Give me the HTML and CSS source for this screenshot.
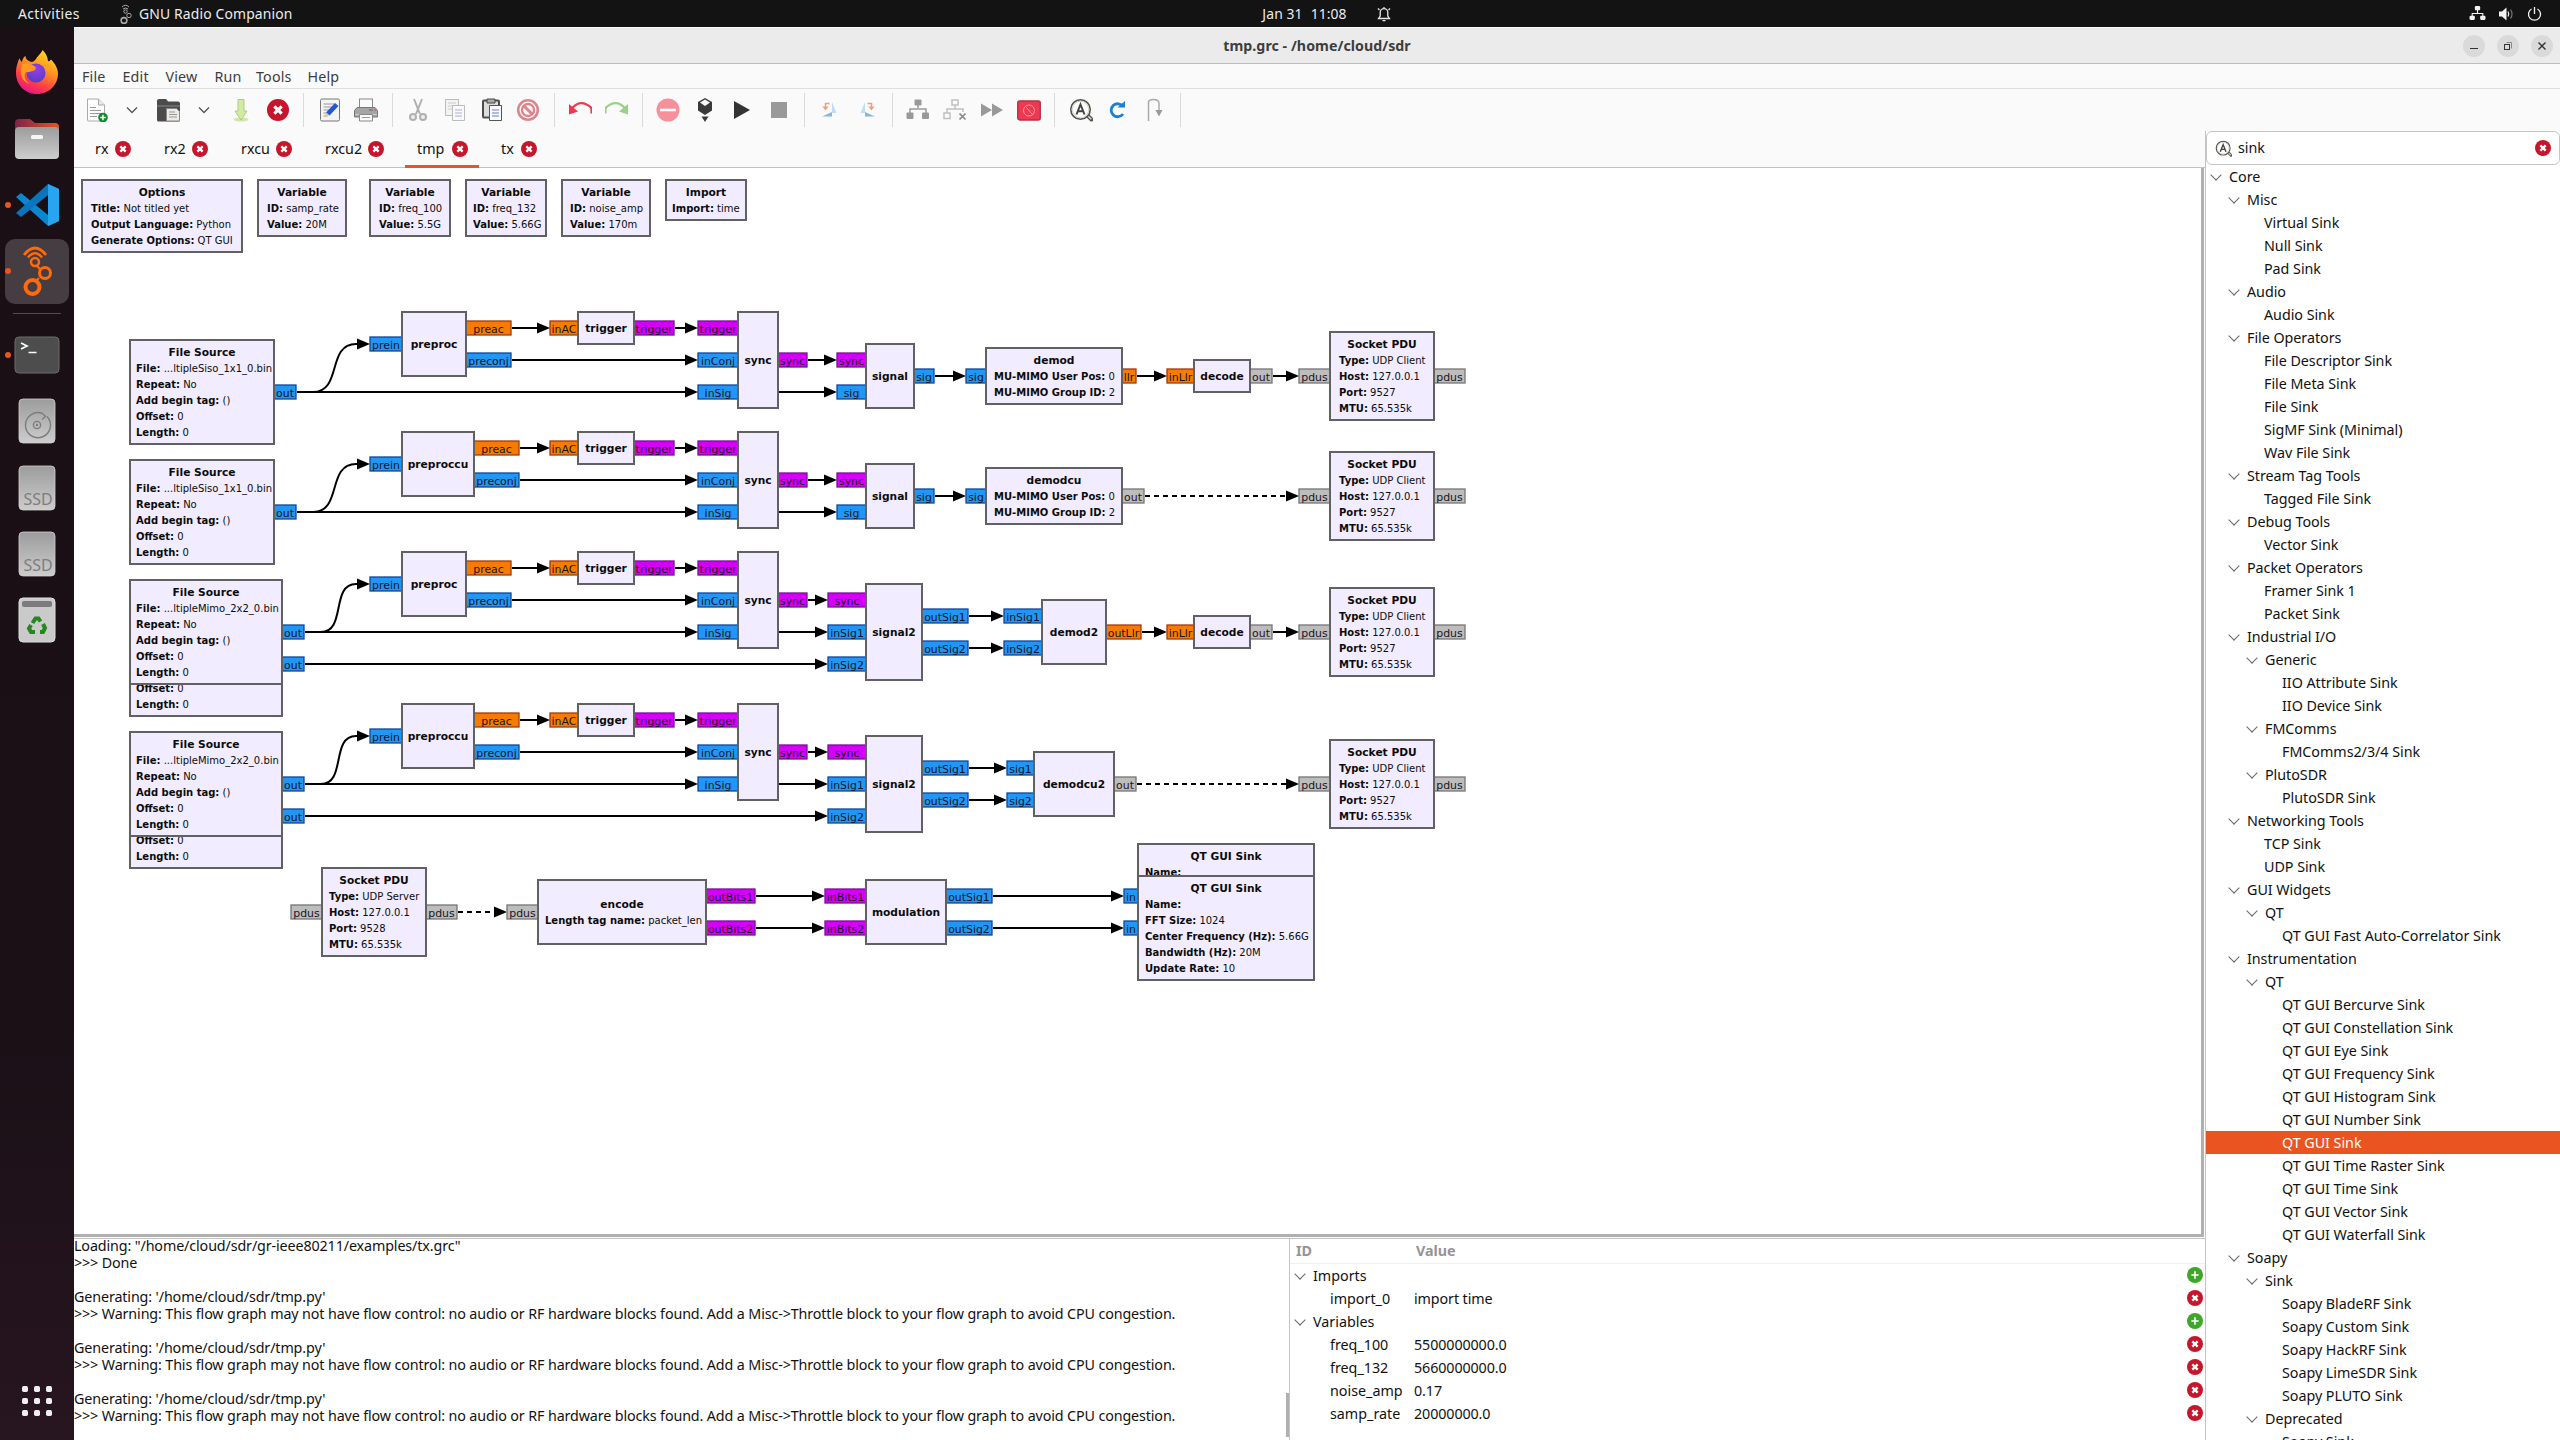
FILE: index.html
```html
<!DOCTYPE html>
<html lang="en">
<head>
<meta charset="utf-8">
<title>tmp.grc - /home/cloud/sdr</title>
<link rel="stylesheet" href="styles.css">
</head>
<body>
<svg class="defs" aria-hidden="true">
  <symbol id="i-close" viewBox="0 0 24 24"><circle cx="12" cy="12" r="12" fill="#c7162b"/><path d="M8 8l8 8M16 8l-8 8" stroke="#fff" stroke-width="3.4"/></symbol>
  <symbol id="i-add" viewBox="0 0 24 24"><circle cx="12" cy="12" r="12" fill="#3fa62a"/><path d="M12 6.5v11M6.500 12h11" stroke="#fff" stroke-width="2.400"/></symbol>
  <symbol id="i-find" viewBox="0 0 24 24"><path d="M18 17l4.500 4.500" stroke="#55554f" stroke-width="4" stroke-linecap="round"/><path d="M18 17l4.300 4.300" stroke="#d9d9d0" stroke-width="1.600"/><circle cx="11.500" cy="11.500" r="9.700" fill="#fff" stroke="#55554f" stroke-width="1.700"/><circle cx="11.500" cy="11.500" r="8.300" fill="none" stroke="#d6d6cc" stroke-width="1.200"/><path d="M7.500 16.500l4-10 4 10M9 13.200h5" fill="none" stroke="#444" stroke-width="2"/></symbol>
  <symbol id="i-chev" viewBox="0 0 12 12"><path d="M1 3.500l5 5 5-5" fill="none" stroke="#555" stroke-width="1.300"/></symbol>
  <symbol id="i-net" viewBox="0 0 16 16"><path d="M8 4v4M3 12V8h10v4" fill="none" stroke="#f2f2f2"/><rect x="5.500" y="1" width="5" height="4" rx="1" fill="#f2f2f2"/><rect x=".5" y="10" width="5" height="4" rx="1" fill="#f2f2f2"/><rect x="10.500" y="10" width="5" height="4" rx="1" fill="#f2f2f2"/></symbol>
  <symbol id="i-ssd" viewBox="0 0 38 46"><rect x="1" y="1" width="36" height="44" rx="4" fill="url(#metal)" stroke="#d0d0d0" stroke-width=".8"/></symbol>
  <linearGradient id="metal" x1="0" y1="0" x2="0" y2="1"><stop offset="0" stop-color="#9c9c9c"/><stop offset="1" stop-color="#cdcdcd"/></linearGradient>
  <linearGradient id="fold" x1="0" y1="0" x2="1" y2="0"><stop offset="0" stop-color="#7a2548"/><stop offset="1" stop-color="#e95420"/></linearGradient>
  <linearGradient id="fox" x1=".8" y1="0" x2=".3" y2="1"><stop offset="0" stop-color="#ffe226"/><stop offset=".4" stop-color="#ff9420"/><stop offset=".75" stop-color="#ff3a4a"/><stop offset="1" stop-color="#e31587"/></linearGradient>
  <radialGradient id="globe" cx=".5" cy=".3" r=".8"><stop offset="0" stop-color="#9a3cf0"/><stop offset="1" stop-color="#4b3fb8"/></radialGradient>
</svg>

<header class="topbar">
  <div class="top-left">
    <span class="activities">Activities</span>
    <svg class="ic-gr" viewBox="0 0 16 20" fill="none" stroke="#a8a8a8"><path d="M5 3Q8.500-.5 12 3M6 5Q8.500 3 11 5"/><circle cx="8.500" cy="7.500" r="1.700"/><circle cx="12" cy="11.500" r="2.200"/><circle cx="7" cy="16.500" r="2.900" stroke-width="1.600"/></svg>
    <span class="appname">GNU Radio Companion</span>
  </div>
  <div class="clock"><span>Jan 31</span><span>11:08</span>
    <svg width="16" height="16" viewBox="0 0 16 16" fill="none" stroke="#e8e8e8" stroke-width="1.300"><path d="M2.500 12.500h11l-1.700-2.500V6.500a3.800 3.800 0 0 0-7.600 0V10zM6.500 14.700h3M8 1v1.500M2 2.500l1.500 1.500M14 2.500L12.500 4"/></svg>
  </div>
  <div class="status">
    <svg width="17" height="17"><use href="#i-net"/></svg>
    <svg width="17" height="16" viewBox="0 0 17 16"><path d="M1 5.500h3L8.500 1.500v13L4 10.500H1z" fill="#f2f2f2"/><path d="M10 5.500q1.500 2.500 0 5" fill="none" stroke="#f2f2f2" stroke-width="1.200"/><path d="M12.500 3.500q3 4.500 0 9" fill="none" stroke="#777" stroke-width="1.200"/></svg>
    <svg width="15" height="16" viewBox="0 0 15 16" fill="none" stroke="#f2f2f2" stroke-width="1.300"><path d="M4.500 3A6 6 0 1 0 10.500 3M7.500 1v7"/></svg>
  </div>
</header>

<div class="desktop">
<nav class="dock">
  <div class="app"><svg width="44" height="44" viewBox="0 0 44 44"><path d="M22 44C9 44 1 34 1 23 1 16 3 12 4.500 8c.5 2 1.500 3.500 2.500 4C7.500 9 9 6.500 10.500 6c0 3 2 5 6 6C20 12 21 8 24 5 26 3 27 1 27.500 0c3 3 5 6 5.500 11 2 1 2-1 3-1.500 4 4 7 9 7 14C43 35 34 44 22 44z" fill="url(#fox)"/><circle cx="21" cy="23" r="9.500" fill="url(#globe)"/><path d="M7 14c5-2 9 0 12 2 3 1 2 4-1 5-3 0-4 2-7 1-3 3-1 9 4 12-8-2-11-10-8-20z" fill="#ff9a1e"/></svg></div>
  <div class="app"><svg width="46" height="42" viewBox="0 0 46 42"><path d="M1 5q0-4 4-4h11l5 4h20q4 0 4 4v12H1z" fill="url(#fold)"/><rect x="1" y="9" width="44" height="32" rx="4" fill="url(#metal)"/><rect x="17" y="17" width="12" height="4" rx="1.500" fill="#f6f6f6"/></svg></div>
  <div class="app running"><svg width="44" height="44" viewBox="0 0 44 44"><path d="M33 1L44 6v32l-11 5L1 14l5-4 27 22z" fill="#0b87d1"/><path d="M33 1L1 30l5 4 27-22z" fill="#0a74bd"/><path d="M33 1l11 5v32l-11 5z" fill="#27a5f0"/></svg></div>
  <div class="app running active"><svg width="36" height="50" viewBox="0 0 36 50" fill="none" stroke="#ff6a0b"><path d="M5 9Q16-5 27 9" stroke-width="2.800"/><path d="M9 11.500Q16 3 23 11.500" stroke-width="2.600"/><circle cx="16" cy="16" r="4" stroke-width="2.500"/><path d="M18 20l4 4M20 32l-3 3" stroke-width="2"/><circle cx="26" cy="27" r="5.500" stroke-width="3"/><circle cx="13.500" cy="41" r="7" stroke-width="4"/></svg></div>
  <hr class="dock-sep">
  <div class="app running"><svg width="46" height="38" viewBox="0 0 46 38"><rect x="1" y="1" width="44" height="36" rx="4" fill="#4d4d4d" stroke="#6c6c6c"/><path d="M7 7l6 3-6 3M14.500 16.500h8" fill="none" stroke="#fff" stroke-width="1.700"/></svg></div>
  <div class="app"><svg width="38" height="46" viewBox="0 0 38 46"><use href="#i-ssd"/><g fill="none" stroke="#7d7d7d" stroke-width="1.400"><path d="M29 18.500A12.500 12.500 0 1 1 24.500 15.500M24.500 15.500L27.500 18.500 24 21.500"/><circle cx="19" cy="27" r="3.600"/></g><circle cx="19" cy="27" r="1.200" fill="#7d7d7d"/></svg></div>
  <div class="app"><svg width="38" height="46" viewBox="0 0 38 46"><use href="#i-ssd"/><text x="5.500" y="40" class="ssd-label">SSD</text></svg></div>
  <div class="app"><svg width="38" height="46" viewBox="0 0 38 46"><use href="#i-ssd"/><text x="5.500" y="40" class="ssd-label">SSD</text></svg></div>
  <div class="app"><svg width="38" height="46" viewBox="0 0 38 46"><rect x="1" y="1" width="36" height="44" rx="4" fill="#cacaca" stroke="#ddd"/><rect x="4" y="4" width="30" height="6" rx="2" fill="#7b7b7b"/><g fill="none" stroke="#26861f" stroke-width="4"><path d="M14.500 26l3-4.500h3l2 3"/><path d="M25 27l2 4-2 4h-3"/><path d="M17 35h-4l-2-3.500 2-3.500"/></g></svg></div>
  <div class="app apps"><svg width="30" height="30" viewBox="0 0 30 30" fill="#efefef"><rect width="6" height="6" rx="1.700"/><rect x="12" width="6" height="6" rx="1.700"/><rect x="24" width="6" height="6" rx="1.700"/><rect y="12" width="6" height="6" rx="1.700"/><rect x="12" y="12" width="6" height="6" rx="1.700"/><rect x="24" y="12" width="6" height="6" rx="1.700"/><rect y="24" width="6" height="6" rx="1.700"/><rect x="12" y="24" width="6" height="6" rx="1.700"/><rect x="24" y="24" width="6" height="6" rx="1.700"/></svg></div>
</nav>

<main class="window">
  <div class="titlebar">
    <h1>tmp.grc - /home/cloud/sdr</h1>
    <div class="winbtns">
      <span><svg width="22" height="22"><path d="M7 13.500h8" stroke="#333"/></svg></span>
      <span><svg width="22" height="22" fill="none"><path d="M9.500 7.500h5v6" stroke="#888"/><rect x="7.500" y="9.500" width="5" height="5" stroke="#333"/></svg></span>
      <span><svg width="22" height="22"><path d="M7.500 7.500l7 7M14.500 7.500l-7 7" stroke="#333" stroke-width="1.400"/></svg></span>
    </div>
  </div>
  <nav class="menubar"><span>File</span><span>Edit</span><span>View</span><span>Run</span><span>Tools</span><span>Help</span></nav>
  <div class="toolbar">
    <i><svg viewBox="0 0 24 24"><path d="M3.500 1h11l6 6v15.500q0 .5-.5.500h-16q-.5 0-.5-.5z" fill="#fdfdfd" stroke="#aaa"/><path d="M14.500 1v6h6" fill="#e8e8e8" stroke="#aaa"/><path d="M6 9.500h6M6 12.500h11M6 15.500h11M6 18.500h7" stroke="#999"/><circle cx="19" cy="19.500" r="4.800" fill="#12872b"/><path d="M19 16.800v5.400M16.300 19.500h5.400" stroke="#fff" stroke-width="1.400"/></svg></i>
    <i class="drop"><svg viewBox="0 0 12 12"><use href="#i-chev"/></svg></i>
    <i><svg viewBox="0 0 24 24"><path d="M0 22V3q0-2 2-2h7l2 2.500h10q2 0 2 2V22q0 1.500-1.500 1.500h-20Q0 23.500 0 22z" fill="#4b4b4b"/><path d="M0 8h23" stroke="#8a8a8a"/><path d="M9.500 10.500h10l3 3v9.500h-13z" fill="#eceae2" stroke="#888"/><path d="M12 14h6M12 16.500h8M12 19h8" stroke="#999"/></svg></i>
    <i class="drop"><svg viewBox="0 0 12 12"><use href="#i-chev"/></svg></i>
    <i><svg viewBox="0 0 24 24"><ellipse cx="12" cy="21.500" rx="7.500" ry="2" fill="#cfe8a8"/><path d="M9 1.500h6V13h3L12 22 6 13h3z" fill="#d3eaa0" stroke="#b0c98a"/></svg></i>
    <i><svg class="big-close" viewBox="0 0 24 24"><use href="#i-close"/></svg></i>
    <b></b>
    <i><svg viewBox="0 0 24 24"><rect x="2.500" y="1" width="19" height="22" rx="1.500" fill="#f4f4f4" stroke="#777"/><path d="M5.500 6h11M5.500 9h9M5.500 12h6M5.500 15h3M5.500 18h4" stroke="#999"/><path d="M17 5l3.500 3-9 9.500L8 14.500z" fill="#2257d6"/><path d="M8 14.500l3.500 3L6.500 19z" fill="#e8c890"/></svg></i>
    <i><svg viewBox="0 0 24 24"><rect x="5.500" y="1" width="13" height="11" fill="#fafafa" stroke="#888"/><path d="M3 9.500h18l2.500 3V19h-23v-6.500z" fill="#a5a5a5" stroke="#777"/><path d="M1 16.500h22" stroke="#ccc"/><path d="M15 12h4" stroke="#666"/><path d="M20 12h2" stroke="#e44"/><path d="M5.500 16.500h13V23h-13z" fill="#fafafa" stroke="#888"/><path d="M8 19.500h8" stroke="#999"/></svg></i>
    <b></b>
    <i><svg viewBox="0 0 24 24" fill="none" stroke="#b0b0b0" stroke-width="2"><path d="M8 1l6 15M16 1l-6 15"/><circle cx="7" cy="19" r="3" fill="#eee"/><circle cx="17" cy="19" r="3" fill="#eee"/></svg></i>
    <i><svg viewBox="0 0 24 24" stroke="#bbb"><path d="M2.500 1.500h13v16h-13z" fill="#f3f3f3"/><path d="M5 5h8M5 8h8M5 11h4" stroke="#ccc"/><path d="M9.500 7.500h12v15h-12z" fill="#fafafa"/><path d="M12 12h7M12 15h7M12 18h7" stroke="#aab0ea"/></svg></i>
    <i><svg viewBox="0 0 24 24"><rect x="3" y="2.500" width="16" height="17" rx="1" fill="#dcdcdc" stroke="#4c4c4c" stroke-width="2"/><path d="M7 1h8v4H7z" fill="#aaa" stroke="#444"/><path d="M9.500 7.500h12v15h-12z" fill="#fafafa" stroke="#555"/><path d="M12 12h7M12 15h7M12 18h7" stroke="#6e79e0"/></svg></i>
    <i><svg viewBox="0 0 24 24" fill="none"><circle cx="12" cy="12" r="9.800" stroke="#e0848c" stroke-width="2.600"/><circle cx="12" cy="12" r="6" stroke="#e0848c" stroke-width="2.400"/><path d="M7.500 7.500l9 9" stroke="#e0848c" stroke-width="3"/></svg></i>
    <b></b>
    <i><svg viewBox="0 0 24 24"><path d="M2.500 12Q12-.5 23 9.500q.8 1.500.5 6" fill="none" stroke="#f0384c" stroke-width="2.200"/><path d="M1 6v10.500l9-3z" fill="#f0384c"/></svg></i>
    <i><svg viewBox="0 0 24 24"><path d="M21.500 12Q12-.5 1 9.500.2 11 .5 15.500" fill="none" stroke="#97d285" stroke-width="2.200"/><path d="M23 6v10.500l-9-3z" fill="#97d285"/></svg></i>
    <b></b>
    <i><svg viewBox="0 0 24 24"><circle cx="12" cy="12" r="11.500" fill="#f7909b"/><path d="M4 12h16" stroke="#fff" stroke-width="2.600"/></svg></i>
    <i><svg viewBox="0 0 24 24"><path d="M12 0l7 4v8.500l-7 4.500-7-4.500V4z" fill="#3a3a3a"/><path d="M12 1.500l5 3-5 3.500-5-3.500z" fill="#fafafa"/><path d="M8.500 18.500h7L12 24z" fill="#3a3a3a"/></svg></i>
    <i><svg viewBox="0 0 24 24"><path d="M4 3l16 9-16 9z" fill="#333"/></svg></i>
    <i><svg viewBox="0 0 24 24"><path d="M4 4h16v16H4z" fill="#999"/></svg></i>
    <b></b>
    <i><svg viewBox="0 0 24 24"><path d="M14 4l4.500 11H14z" fill="#c3dcf3"/><path d="M14 14v4.500H4z" fill="#82b7e6"/><path d="M11.500 5.500h-4v5" fill="none" stroke="#f29c7e" stroke-width="1.500"/><path d="M4.500 8.500h6l-3 4z" fill="#f29c7e"/></svg></i>
    <i><svg viewBox="0 0 24 24"><path d="M10 4L5.500 15H10z" fill="#c3dcf3"/><path d="M10 14v4.500h10z" fill="#82b7e6"/><path d="M12.500 5.500h4v5" fill="none" stroke="#f29c7e" stroke-width="1.500"/><path d="M13.500 8.500h6l-3 4z" fill="#f29c7e"/></svg></i>
    <b></b>
    <i><svg viewBox="0 0 24 24" fill="#999"><path d="M12 6v4M4 15v-4h16v4" fill="none" stroke="#999" stroke-width="1.500"/><rect x="8.500" y="1.500" width="7" height="6" rx="1"/><rect x=".5" y="14.500" width="7" height="6.500" rx="1"/><rect x="16" y="14.500" width="7" height="6.500" rx="1"/></svg></i>
    <i><svg viewBox="0 0 24 24" fill="none" stroke="#c0c0c0" stroke-width="1.500"><path d="M12 7v4M4 15v-4h16v3"/><rect x="9" y="2" width="6" height="5"/><rect x="1" y="15" width="6" height="5.500"/><path d="M16.500 15.500l6 6M22.500 15.500l-6 6" stroke="#888" stroke-width="1.700"/></svg></i>
    <i><svg viewBox="0 0 24 24" fill="#999"><path d="M1 5.500l11 6.500-11 6.500zM12 5.500l11 6.500-11 6.500z"/></svg></i>
    <i><svg viewBox="0 0 24 24"><rect x=".7" y="3" width="22.600" height="19" rx="2" fill="#ed3a51" stroke="#b23343" stroke-width="1.300"/><g fill="none" stroke="#ff9aa6"><circle cx="12" cy="12.500" r="5.500"/><path d="M8.500 8.500l7 8"/></g></svg></i>
    <b></b>
    <i><svg viewBox="0 0 24 24"><use href="#i-find"/></svg></i>
    <i><svg viewBox="0 0 24 24"><path d="M18 8.500A6.500 6.500 0 1 0 18 16" fill="none" stroke="#1b7fd6" stroke-width="2.800"/><path d="M12.500 9.500h7.500V3z" fill="#1b7fd6"/></svg></i>
    <i><svg class="bypass" viewBox="0 0 24 24"><path d="M5.500 23V4.500q0-3 5-3t5.500 3.500v9" fill="none" stroke="#aaa" stroke-width="1.500"/><path d="M12.500 12h7L16 18.500z" fill="#999"/></svg></i>
    <b></b>
  </div>

  <div class="work">
    <div class="left">
      <div class="tabs">
        <span>rx<svg><use href="#i-close"/></svg></span><span>rx2<svg><use href="#i-close"/></svg></span><span>rxcu<svg><use href="#i-close"/></svg></span><span>rxcu2<svg><use href="#i-close"/></svg></span><span class="on">tmp<svg><use href="#i-close"/></svg></span><span>tx<svg><use href="#i-close"/></svg></span>
      </div>
      <div class="canvas"><svg id="graph" width="2127" height="1064" viewBox="74 168 2127 1064"></svg></div>
      <div class="bottom">
        <div class="logbox"><pre class="log">Loading: "/home/cloud/sdr/gr-ieee80211/examples/tx.grc"
&gt;&gt;&gt; Done

Generating: '/home/cloud/sdr/tmp.py'
<span>&gt;&gt;&gt; Warning: This flow graph may not have flow control: no audio or RF hardware blocks found. Add a Misc-&gt;Throttle block to your flow graph to avoid CPU congestion.</span>

Generating: '/home/cloud/sdr/tmp.py'
<span>&gt;&gt;&gt; Warning: This flow graph may not have flow control: no audio or RF hardware blocks found. Add a Misc-&gt;Throttle block to your flow graph to avoid CPU congestion.</span>

Generating: '/home/cloud/sdr/tmp.py'
<span>&gt;&gt;&gt; Warning: This flow graph may not have flow control: no audio or RF hardware blocks found. Add a Misc-&gt;Throttle block to your flow graph to avoid CPU congestion.</span></pre></div>
        <div class="vars">
          <div class="vhead"><span>ID</span><span>Value</span></div>
          <div class="vrow grp"><span>Imports</span><span></span><svg><use href="#i-add"/></svg></div>
          <div class="vrow"><span>import_0</span><span>import time</span><svg><use href="#i-close"/></svg></div>
          <div class="vrow grp"><span>Variables</span><span></span><svg><use href="#i-add"/></svg></div>
          <div class="vrow"><span>freq_100</span><span>5500000000.0</span><svg><use href="#i-close"/></svg></div>
          <div class="vrow"><span>freq_132</span><span>5660000000.0</span><svg><use href="#i-close"/></svg></div>
          <div class="vrow"><span>noise_amp</span><span>0.17</span><svg><use href="#i-close"/></svg></div>
          <div class="vrow"><span>samp_rate</span><span>20000000.0</span><svg><use href="#i-close"/></svg></div>
        </div>
      </div>
    </div>
    <aside class="right">
      <div class="search"><svg><use href="#i-find"/></svg><span>sink</span><svg class="clear"><use href="#i-close"/></svg></div>
      <ul class="tree">
        <li class="l0 open">Core</li>
        <li class="l1 open">Misc</li>
        <li class="l2">Virtual Sink</li>
        <li class="l2">Null Sink</li>
        <li class="l2">Pad Sink</li>
        <li class="l1 open">Audio</li>
        <li class="l2">Audio Sink</li>
        <li class="l1 open">File Operators</li>
        <li class="l2">File Descriptor Sink</li>
        <li class="l2">File Meta Sink</li>
        <li class="l2">File Sink</li>
        <li class="l2">SigMF Sink (Minimal)</li>
        <li class="l2">Wav File Sink</li>
        <li class="l1 open">Stream Tag Tools</li>
        <li class="l2">Tagged File Sink</li>
        <li class="l1 open">Debug Tools</li>
        <li class="l2">Vector Sink</li>
        <li class="l1 open">Packet Operators</li>
        <li class="l2">Framer Sink 1</li>
        <li class="l2">Packet Sink</li>
        <li class="l1 open">Industrial I/O</li>
        <li class="l2 open">Generic</li>
        <li class="l3">IIO Attribute Sink</li>
        <li class="l3">IIO Device Sink</li>
        <li class="l2 open">FMComms</li>
        <li class="l3">FMComms2/3/4 Sink</li>
        <li class="l2 open">PlutoSDR</li>
        <li class="l3">PlutoSDR Sink</li>
        <li class="l1 open">Networking Tools</li>
        <li class="l2">TCP Sink</li>
        <li class="l2">UDP Sink</li>
        <li class="l1 open">GUI Widgets</li>
        <li class="l2 open">QT</li>
        <li class="l3">QT GUI Fast Auto-Correlator Sink</li>
        <li class="l1 open">Instrumentation</li>
        <li class="l2 open">QT</li>
        <li class="l3">QT GUI Bercurve Sink</li>
        <li class="l3">QT GUI Constellation Sink</li>
        <li class="l3">QT GUI Eye Sink</li>
        <li class="l3">QT GUI Frequency Sink</li>
        <li class="l3">QT GUI Histogram Sink</li>
        <li class="l3">QT GUI Number Sink</li>
        <li class="l3 selected">QT GUI Sink</li>
        <li class="l3">QT GUI Time Raster Sink</li>
        <li class="l3">QT GUI Time Sink</li>
        <li class="l3">QT GUI Vector Sink</li>
        <li class="l3">QT GUI Waterfall Sink</li>
        <li class="l1 open">Soapy</li>
        <li class="l2 open">Sink</li>
        <li class="l3">Soapy BladeRF Sink</li>
        <li class="l3">Soapy Custom Sink</li>
        <li class="l3">Soapy HackRF Sink</li>
        <li class="l3">Soapy LimeSDR Sink</li>
        <li class="l3">Soapy PLUTO Sink</li>
        <li class="l2 open">Deprecated</li>
        <li class="l3">Soapy Sink</li>
      </ul>
    </aside>
  </div>
</main>
</div>
<script src="graph.js"></script>
</body>
</html>
```
FILE: styles.css
```css
* { box-sizing: border-box; margin: 0; padding: 0; }
html, body { width: 2560px; height: 1440px; overflow: hidden; }
body {
  display: flex; flex-direction: column;
  font: 14.3px/20px "Noto Sans", "Open Sans", sans-serif;
  color: #111; background: #fff;
}
svg { display: block; flex: none; }
.defs { position: absolute; width: 0; height: 0; }

/* GNOME top bar */
.topbar {
  height: 27px; flex: none; display: grid; grid-template-columns: 1fr auto 1fr;
  align-items: center; background: #131313; color: #ececec; font-size: 13.9px;
}
.top-left { display: flex; align-items: center; padding-left: 18px; }
.activities { width: 99px; letter-spacing: .4px; }
.appname { letter-spacing: .15px; }
.ic-gr { width: 16px; height: 20px; margin-right: 6px; }
.clock { display: flex; align-items: center; gap: 8px; padding-left: 82px; letter-spacing: .1px; }
.clock svg { margin-left: 21px; margin-right: -12px; }
.status { display: flex; justify-content: flex-end; align-items: center; gap: 12px; padding-right: 18px; }

.desktop { flex: 1; display: flex; min-height: 0; }

/* Dock */
.dock {
  width: 74px; flex: none; display: flex; flex-direction: column; padding: 12px 0 6px;
  background: linear-gradient(180deg, #190f15 0, #1a1016 70%, #27151f 100%);
}
.app { height: 66.400px; flex: none; margin: 0 5px; display: flex; align-items: center; justify-content: center; position: relative; border-radius: 10px; }
.app.active { background: #463d43; height: 64.400px; margin-block: 1px; }
.app.running::before { content: ""; position: absolute; left: 0; top: 50%; width: 6px; height: 6px; margin-top: -3px; border-radius: 50%; background: #e95420; }
.apps { margin-top: auto; }
.dock-sep { border: 0; height: 1px; margin: 8px 13px; background: #55494f; }
.ssd-label { font: 16px "Noto Sans", sans-serif; fill: #7d7d7d; }

/* Window chrome */
.window { flex: 1; min-width: 0; display: flex; flex-direction: column; background: #fafafa; }
.titlebar { height: 37px; flex: none; display: grid; grid-template-columns: 1fr; align-items: center; justify-items: center; background: #ebebeb; border-bottom: 1px solid #bdbdbd; border-top: 1px solid #f8f8f8; }
.titlebar > * { grid-area: 1 / 1; }
.titlebar h1 { font-size: 14.200px; font-weight: 700; color: #3d3d3d; letter-spacing: .05px; }
.winbtns { justify-self: end; display: flex; gap: 12px; padding-right: 7px; }
.winbtns span { width: 22px; height: 22px; border-radius: 50%; background: #dadada; }
.menubar { height: 25px; flex: none; display: grid; grid-template-columns: 40.500px 43px 49px 41.500px 51.500px auto; justify-content: start; align-items: center; padding: 2px 0 0 8px; color: #3d3d3d; border-bottom: 1px solid #dedede; letter-spacing: .15px; }
.toolbar { height: 42px; flex: none; display: flex; align-items: center; padding-left: 4px; }
.toolbar i { width: 36.900px; display: flex; justify-content: center; }
.toolbar i svg { width: 24px; height: 24px; }
.toolbar i svg.bypass { margin-left: 2px; }
.toolbar .drop { width: 35.500px; }
.toolbar .drop svg { width: 12px; height: 12px; margin-right: 2px; }
.toolbar i svg.big-close { width: 22px; height: 22px; }
.toolbar b { width: 1px; height: 34px; margin: 0 6.750px; background: #dadada; }

.work { flex: 1; min-height: 0; display: flex; }
.left { flex: 1; min-width: 0; display: flex; flex-direction: column; }
.tabs { height: 37px; flex: none; display: grid; grid-template-columns: 59px 67px 74px 82px 74px 59px; gap: 10px; padding-left: 9px; border-bottom: 1px solid #c2c2c2; }
.tabs span { display: flex; align-items: center; justify-content: space-between; padding: 0 11px 1px 12px; height: 37px; }
.tabs svg { width: 16px; height: 16px; }
.tabs .on { border-bottom: 3px solid #e95420; padding-top: 2px; padding-bottom: 0; }
.canvas { flex: 1; min-height: 0; background: #fff; border-right: 3px solid #b0b0b0; border-bottom: 3px solid #b0b0b0; margin-right: 1px; overflow: hidden; }
.bottom { height: 202px; flex: none; display: flex; background: #fff; margin-top: 1px; border-top: 1px solid #c4c4c4; }
.logbox { flex: 1; min-width: 0; border-right: 3px solid; border-image: linear-gradient(#fff 153px, #b0b0b0 153px, #b0b0b0 197px, #fff 197px) 1; }
.log { font: inherit; line-height: 17px; letter-spacing: -.12px; white-space: pre; margin-top: -2px; }
.vars { width: 916px; flex: none; border-left: 1px solid #c4c4c4; }
.vhead { height: 25px; display: flex; align-items: center; padding-left: 6px; color: #949494; font-weight: 700; border-bottom: 1px solid #f0f0f0; }
.vhead span:first-child { width: 120px; }
.vrow { height: 23px; display: flex; align-items: center; padding-right: 2px; }
.vrow span:first-child { width: 124px; padding-left: 40px; }
.vrow.grp span:first-child { padding-left: 22px; position: relative; }
.vrow span:nth-child(2) { flex: 1; letter-spacing: -.1px; }
.vrow svg { width: 16px; height: 16px; margin-top: -1px; }

/* Block library */
.right { width: 355px; flex: none; background: #fff; border-left: 1px solid #c4c4c4; overflow: hidden; }
.search { height: 34px; display: flex; align-items: center; gap: 6px; padding: 0 8px; border: 1px solid #c4c4c4; border-radius: 6px; }
.search span { flex: 1; }
.search svg { width: 17px; height: 17px; }
.search svg.clear { width: 16px; height: 16px; }
.tree { list-style: none; }
.tree li { height: 23px; line-height: 23px; position: relative; white-space: nowrap; letter-spacing: -.03px; }
.tree .l0 { padding-left: 22px; }
.tree .l1 { padding-left: 40px; }
.tree .l2 { padding-left: 58px; }
.tree .l3 { padding-left: 76px; }
.tree .selected { background: #e95420; color: #fff; }
.tree .open::before, .grp span:first-child::before {
  content: ""; display: inline-block; width: 7px; height: 7px; margin: 0 9px 3px -16px;
  border: solid #666; border-width: 0 1px 1px 0; transform: rotate(45deg);
}

/* Flow graph */
#graph text { font-family: "DejaVu Sans", sans-serif; font-size: 10px; fill: #0c0c0c; }
#graph .title { font-size: 10.670px; font-weight: 700; text-anchor: middle; }
#graph .key { font-weight: 700; }
#graph .body { fill: #f1ecff; stroke: #616161; stroke-width: 2; }
#graph .port { stroke-width: 1.300; }
#graph .port.c { fill: #2196f3; stroke: #0d47a1; }
#graph .port.f { fill: #f57c00; stroke: #a8380a; }
#graph .port.s { fill: #d500f9; stroke: #7b0f98; }
#graph .port.m { fill: #bdbdbd; stroke: #757575; }
#graph .ptext { font-size: 10.900px; text-anchor: middle; fill: #1a1420; }
#graph .wire { fill: none; stroke: #000; stroke-width: 2; }
#graph .msg { stroke-dasharray: 5 4; }
```
FILE: graph.js
```js
const NS = 'http://www.w3.org/2000/svg';
const graph = document.getElementById('graph');

function add(tag, attrs, parent = graph, text) {
  const el = document.createElementNS(NS, tag);
  for (const k in attrs) el.setAttribute(k, attrs[k]);
  if (text !== undefined) el.textContent = text;
  parent.appendChild(el);
  return el;
}

// Port colour classes: c complex, f float, s short, m message.
// A port is [x1, x2, centre y, class, label].
function port([x1, x2, cy, type, label]) {
  add('rect', { class: 'port ' + type, x: x1, y: cy - 7, width: x2 - x1, height: 14 });
  add('text', { class: 'ptext', x: (x1 + x2) / 2, y: cy + 5 }, graph, label);
}

// shown = [first, last] text line to draw when another block covers the rest
function block(x, y, w, h, title, params = [], textX = 0, shown = [0, 99]) {
  add('rect', { class: 'body', x, y, width: w, height: h });
  const lines = params.length + 1;
  let ty = y + h / 2 - lines * 8 + 11.500;
  if (lines === 1) ty += 0.5;
  if (shown[0] === 0) add('text', { class: 'title', x: x + w / 2, y: ty }, graph, title);
  params.forEach(([key, value], i) => {
    ty += 16;
    if (i + 1 < shown[0] || i + 1 > shown[1]) return;
    const t = add('text', { x: textX, y: ty });
    add('tspan', { class: 'key' }, t, key + ':');
    add('tspan', {}, t, ' ' + value);
  });
}

function arrow(x, y) {
  add('path', { d: `M${x - 13} ${y - 5.500}L${x} ${y}L${x - 13} ${y + 5.500}z` });
}
function wire(x1, x2, y, msg) {
  add('path', { class: 'wire' + (msg ? ' msg' : ''), d: `M${x1} ${y}H${x2 - 10}` });
  arrow(x2, y);
}
function curve(x1, y1, x2, y2) {
  const s = x1 + 16, e = x2 - 14, m = (s + e) / 2;
  add('path', { class: 'wire', d: `M${x1} ${y1}H${s}C${m + 8} ${y1} ${m - 8} ${y2} ${e} ${y2}H${x2 - 10}` });
  arrow(x2, y2);
}

block(82, 180, 160, 72, 'Options', [['Title', 'Not titled yet'], ['Output Language', 'Python'], ['Generate Options', 'QT GUI']], 91);
block(258, 180, 88, 56, 'Variable', [['ID', 'samp_rate'], ['Value', '20M']], 267);
block(370, 180, 80, 56, 'Variable', [['ID', 'freq_100'], ['Value', '5.5G']], 379);
block(466, 180, 80, 56, 'Variable', [['ID', 'freq_132'], ['Value', '5.66G']], 473);
block(562, 180, 88, 56, 'Variable', [['ID', 'noise_amp'], ['Value', '170m']], 570);
block(666, 180, 80, 40, 'Import', [['Import', 'time']], 672);

const fileParams = name => [['File', name], ['Repeat', 'No'], ['Add begin tag', '()'], ['Offset', '0'], ['Length', '0']];
const socketParams = (type, p) => [['Type', type], ['Host', '127.0.0.1'], ['Port', p], ['MTU', '65.535k']];

// Source, preprocessing, trigger and sync stages; y is the top of the sync block.
function frontEnd(y, srcY, mimo, cu) {
  const srcR = mimo ? 282 : 274, preR = cu ? 474 : 466;
  const name = mimo ? '...ltipleMimo_2x2_0.bin' : '...ltipleSiso_1x1_0.bin';
  port([srcR, srcR + 22, y + 80, 'c', 'out']);
  if (mimo) {
    port([srcR, srcR + 22, y + 112, 'c', 'out']);
    block(130, srcY + 32, srcR - 130, 104, 'File Source', fileParams(name), 136, [4, 5]);
    wire(305, 828, y + 112);
  }
  block(130, srcY, srcR - 130, 104, 'File Source', fileParams(name), 136);
  port([370, 402, y + 32, 'c', 'prein']);
  port([preR, preR + 45, y + 16, 'f', 'preac']);
  port([preR, preR + 45, y + 48, 'c', 'preconj']);
  block(402, y, preR - 402, 64, cu ? 'preproccu' : 'preproc');
  port([550, 578, y + 16, 'f', 'inAC']);
  port([634, 674, y + 16, 's', 'trigger']);
  block(578, y, 56, 32, 'trigger');
  port([698, 738, y + 16, 's', 'trigger']);
  port([698, 738, y + 48, 'c', 'inConj']);
  port([698, 738, y + 80, 'c', 'inSig']);
  port([778, 807, y + 48, 's', 'sync']);
  block(738, y, 40, 96, 'sync');
  curve(srcR + 23, y + 80, 370, y + 32);
  wire(srcR + 23, 698, y + 80);
  wire(preR + 46, 550, y + 16);
  wire(preR + 46, 698, y + 48);
  wire(675, 698, y + 16);
  const inX = mimo ? 828 : 837;
  wire(808, inX, y + 48);
  wire(779, inX, y + 80);
  port([inX, 866, y + 48, 's', 'sync']);
  port([inX, 866, y + 80, 'c', mimo ? 'inSig1' : 'sig']);
  if (mimo) port([inX, 866, y + 112, 'c', 'inSig2']);
}

function client(y) {
  port([1299, 1330, y + 44, 'm', 'pdus']);
  port([1434, 1465, y + 44, 'm', 'pdus']);
  block(1330, y, 104, 88, 'Socket PDU', socketParams('UDP Client', '9527'), 1339);
}

function decoder(cy) {
  port([1167, 1194, cy, 'f', 'inLlr']);
  port([1250, 1272, cy, 'm', 'out']);
  block(1194, cy - 16, 56, 32, 'decode');
  wire(1273, 1299, cy);
}

// Single-stream chains
for (const [y, name] of [[312, 'demod'], [432, 'demodcu']]) {
  const cy = y + 64;
  frontEnd(y, y + 28, false, name === 'demodcu');
  port([914, 934, cy, 'c', 'sig']);
  block(866, y + 32, 48, 64, 'signal');
  wire(935, 966, cy);
  port([966, 986, cy, 'c', 'sig']);
  port(name === 'demod' ? [1122, 1136, cy, 'f', 'llr'] : [1122, 1144, cy, 'm', 'out']);
  block(986, y + 36, 136, 56, name, [['MU-MIMO User Pos', '0'], ['MU-MIMO Group ID', '2']], 994);
  client(y + 20);
}
decoder(376);
wire(1137, 1167, 376);
wire(1145, 1299, 496, true);

// Two-stream chains
for (const y of [552, 704]) {
  frontEnd(y, y + 28, true, y === 704);
  port([922, 968, y + 64, 'c', 'outSig1']);
  port([922, 968, y + 96, 'c', 'outSig2']);
  block(866, y + 32, 56, 96, 'signal2');
  client(y + 36);
}
for (const i of [0, 1]) {
  wire(969, 1004, 616 + 32 * i);
  port([1004, 1042, 616 + 32 * i, 'c', 'inSig' + (i + 1)]);
  wire(969, 1007, 768 + 32 * i);
  port([1007, 1034, 768 + 32 * i, 'c', 'sig' + (i + 1)]);
}
port([1106, 1141, 632, 'f', 'outLlr']);
block(1042, 600, 64, 64, 'demod2');
wire(1142, 1167, 632);
decoder(632);
port([1114, 1136, 784, 'm', 'out']);
block(1034, 752, 80, 64, 'demodcu2');
wire(1137, 1299, 784, true);

// Transmit chain
port([291, 322, 912, 'm', 'pdus']);
port([426, 457, 912, 'm', 'pdus']);
block(322, 868, 104, 88, 'Socket PDU', socketParams('UDP Server', '9528'), 329);
wire(458, 507, 912, true);
port([507, 538, 912, 'm', 'pdus']);
for (const i of [0, 1]) {
  const y = 896 + 32 * i;
  port([706, 755, y, 's', 'outBits' + (i + 1)]);
  wire(756, 825, y);
  port([825, 866, y, 's', 'inBits' + (i + 1)]);
  port([946, 992, y, 'c', 'outSig' + (i + 1)]);
  wire(993, 1124, y);
  port([1124, 1138, y, 'c', 'in']);
}
block(538, 880, 168, 64, 'encode', [['Length tag name', 'packet_len']], 545);
block(866, 880, 80, 64, 'modulation');
const sink = [['Name', ''], ['FFT Size', '1024'], ['Center Frequency (Hz)', '5.66G'], ['Bandwidth (Hz)', '20M'], ['Update Rate', '10']];
block(1138, 844, 176, 104, 'QT GUI Sink', sink, 1145, [0, 1]);
block(1138, 876, 176, 104, 'QT GUI Sink', sink, 1145);
```
